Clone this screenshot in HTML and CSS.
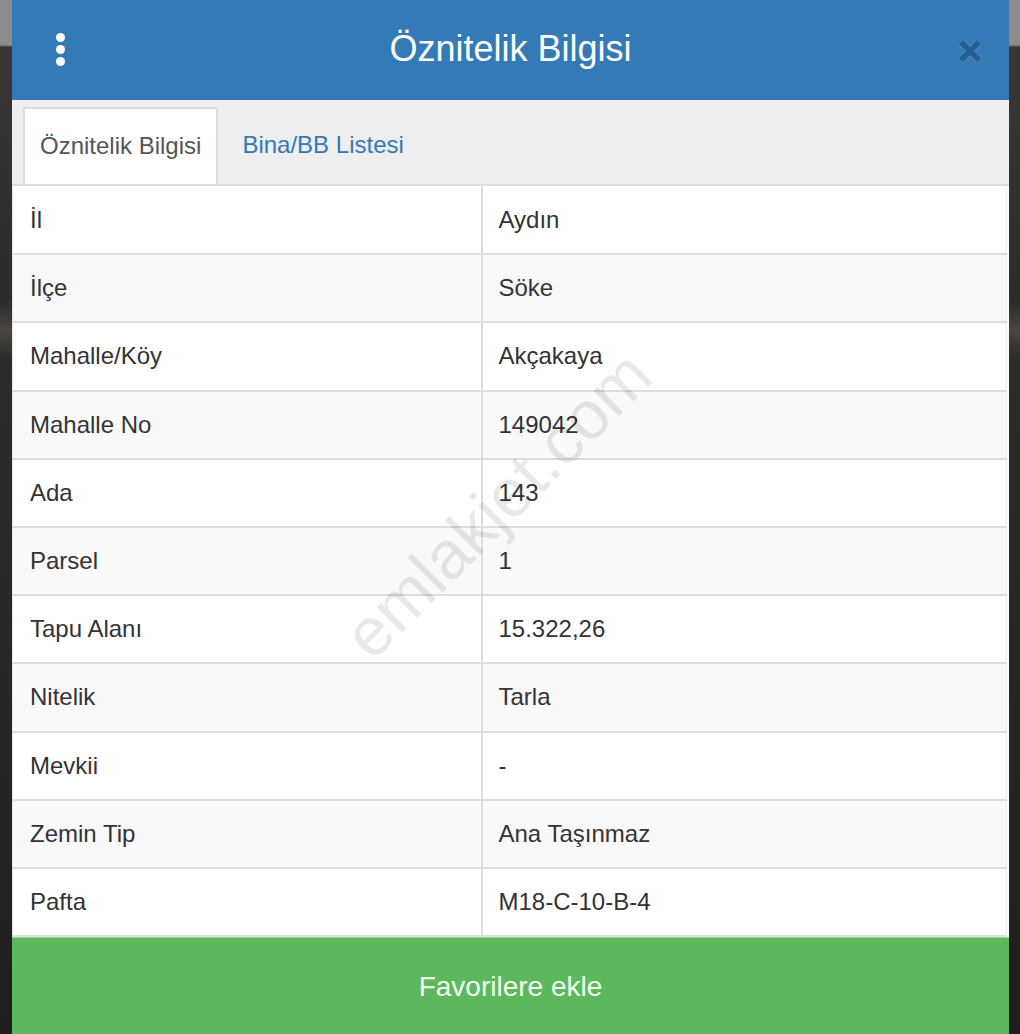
FILE: index.html
```html
<!DOCTYPE html>
<html lang="tr">
<head>
<meta charset="utf-8">
<title>Öznitelik Bilgisi</title>
<link rel="stylesheet" href="styles.css">
</head>
<body>
<div class="backdrop">
  <div class="modal">
    <header class="modal-header">
      <div class="menu-btn" aria-label="menu">
        <span class="dot"></span><span class="dot"></span><span class="dot"></span>
      </div>
      <h1 class="modal-title">Öznitelik Bilgisi</h1>
      <div class="close-btn" aria-label="close">
        <svg width="28" height="28" viewBox="0 0 28 28">
          <path d="M5 5 L23 23 M23 5 L5 23" stroke="#5a8fc2" stroke-width="8" stroke-linecap="butt" opacity="0.7"/>
          <path d="M5 5 L23 23 M23 5 L5 23" stroke="#23609a" stroke-width="6" stroke-linecap="butt"/>
        </svg>
      </div>
    </header>
    <nav class="tabs">
      <div class="tab active">Öznitelik Bilgisi</div>
      <div class="tab link">Bina/BB Listesi</div>
    </nav>
    <div class="table-wrap">
      <table class="attr-table">
        <tbody>
          <tr><td>İl</td><td>Aydın</td></tr>
          <tr><td>İlçe</td><td>Söke</td></tr>
          <tr><td>Mahalle/Köy</td><td>Akçakaya</td></tr>
          <tr><td>Mahalle No</td><td>149042</td></tr>
          <tr><td>Ada</td><td>143</td></tr>
          <tr><td>Parsel</td><td>1</td></tr>
          <tr><td>Tapu Alanı</td><td>15.322,26</td></tr>
          <tr><td>Nitelik</td><td>Tarla</td></tr>
          <tr><td>Mevkii</td><td>-</td></tr>
          <tr><td>Zemin Tip</td><td>Ana Taşınmaz</td></tr>
          <tr><td>Pafta</td><td>M18-C-10-B-4</td></tr>
        </tbody>
      </table>
      <div class="watermark">emlakjet.com</div>
    </div>
    <div class="fav-btn">Favorilere ekle</div>
  </div>
</div>
</body>
</html>
```

FILE: styles.css
```css
html, body {
  margin: 0;
  padding: 0;
  height: 100%;
  overflow: hidden;
}

body {
  font-family: "Liberation Sans", Arial, sans-serif;
  background: #2a2927;
}

.backdrop {
  min-height: 100%;
  background:
    linear-gradient(to bottom, #8c8c8c 0, #8c8c8c 45px, #3a3836 47px, #2c2b29 300px, #4a4640 330px, #2d2b28 360px, #262523 700px, #1f1f1f 1034px);
  padding: 0 11px 0 12px;
}

.modal {
  width: 997px;
  background: #fff;
  display: flex;
  flex-direction: column;
}

.modal-header {
  height: 100px;
  background: #337ab7;
  display: grid;
  grid-template-columns: 1fr auto 1fr;
  align-items: center;
}

.menu-btn {
  display: flex;
  flex-direction: column;
  gap: 3px;
  padding-left: 44px;
  margin-top: -1px;
}

.dot {
  width: 9px;
  height: 9px;
  border-radius: 50%;
  background: #fff;
  display: block;
}

.modal-title {
  margin: 0;
  color: #fff;
  font-weight: normal;
  font-size: 36px;
  line-height: 1;
  margin-top: -2px;
}

.close-btn {
  justify-self: end;
  padding-right: 25px;
  display: flex;
  margin-top: 2px;
}

.tabs {
  height: 86px;
  box-sizing: border-box;
  background: #eeeeee;
  border-bottom: 2px solid #dddddd;
  padding: 7px 0 0 11px;
  display: flex;
  gap: 7px;
}

.tab {
  font-size: 24px;
  height: 77px;
  box-sizing: border-box;
  display: flex;
  align-items: center;
  white-space: nowrap;
  padding: 0 17px 2px 17px;
}

.tab.active {
  background: #fff;
  color: #555;
  border: 2px solid #dddddd;
  border-bottom: none;
  padding: 0 15px 2px 15px;
}

.tab.link {
  color: #337ab7;
}

.table-wrap {
  position: relative;
  overflow: hidden;
}

.attr-table {
  width: 995px;
  border-collapse: collapse;
  font-size: 24px;
  color: #333;
}

.attr-table td {
  border: 2px solid #dddddd;
  border-top: none;
  height: 68.2px;
  box-sizing: border-box;
  padding: 0 16px;
  line-height: 34px;
  vertical-align: middle;
}

.attr-table td:first-child {
  width: 469px;
  border-left: 1px solid #e6e6e6;
  padding-left: 17px;
}

.attr-table td:last-child {
  border-right: 1px solid #eeeeee;
}

.attr-table tr:nth-child(even) td {
  background: #f9f9f9;
}

.watermark {
  position: absolute;
  left: 485px;
  top: 318px;
  transform: translate(-50%, -50%) rotate(-45deg);
  font-size: 68px;
  color: rgba(0, 0, 0, 0.09);
  white-space: nowrap;
  pointer-events: none;
}

.fav-btn {
  background: #5cb85c;
  color: #f4fff0;
  font-size: 28px;
  text-align: center;
  height: 120px;
  padding-top: 33px;
  box-sizing: border-box;
  border-top: 1px solid #9fd49f;
}
```
